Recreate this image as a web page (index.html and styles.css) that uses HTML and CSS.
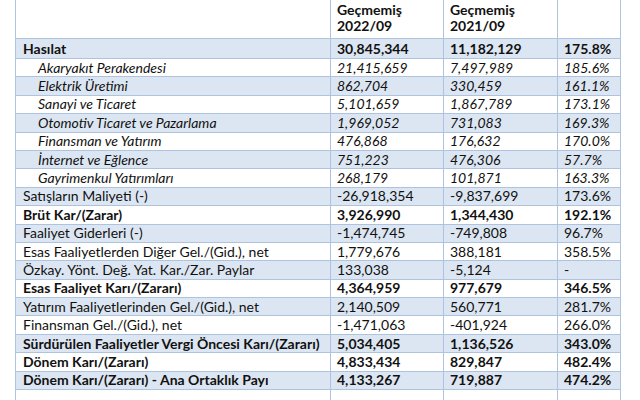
FILE: index.html
```html
<!DOCTYPE html>
<html lang="tr">
<head>
<meta charset="utf-8">
<title>Gelir Tablosu</title>
<link rel="stylesheet" href="styles.css">
</head>
<body>
<table class="fin">
  <colgroup>
    <col class="c-label"><col class="c-num"><col class="c-num2"><col class="c-pct">
  </colgroup>
  <thead>
    <tr class="head">
      <th></th>
      <th>Geçmemiş<br>2022/09</th>
      <th>Geçmemiş<br>2021/09</th>
      <th></th>
    </tr>
  </thead>
  <tbody>
    <tr class="b blue first"><td>Hasılat</td><td>30,845,344</td><td>11,182,129</td><td>175.8%</td></tr>
    <tr class="i"><td>Akaryakıt Perakendesi</td><td>21,415,659</td><td>7,497,989</td><td>185.6%</td></tr>
    <tr class="i blue"><td>Elektrik Üretimi</td><td>862,704</td><td>330,459</td><td>161.1%</td></tr>
    <tr class="i"><td>Sanayi ve Ticaret</td><td>5,101,659</td><td>1,867,789</td><td>173.1%</td></tr>
    <tr class="i blue"><td>Otomotiv Ticaret ve Pazarlama</td><td>1,969,052</td><td>731,083</td><td>169.3%</td></tr>
    <tr class="i"><td>Finansman ve Yatırım</td><td>476,868</td><td>176,632</td><td>170.0%</td></tr>
    <tr class="i blue"><td>İnternet ve Eğlence</td><td>751,223</td><td>476,306</td><td>57.7%</td></tr>
    <tr class="i"><td>Gayrimenkul Yatırımları</td><td>268,179</td><td>101,871</td><td>163.3%</td></tr>
    <tr class="blue"><td>Satışların Maliyeti (-)</td><td>-26,918,354</td><td>-9,837,699</td><td>173.6%</td></tr>
    <tr class="b"><td>Brüt Kar/(Zarar)</td><td>3,926,990</td><td>1,344,430</td><td>192.1%</td></tr>
    <tr class="blue"><td>Faaliyet Giderleri (-)</td><td>-1,474,745</td><td>-749,808</td><td>96.7%</td></tr>
    <tr><td>Esas Faaliyetlerden Diğer Gel./(Gid.), net</td><td>1,779,676</td><td>388,181</td><td>358.5%</td></tr>
    <tr class="blue"><td>Özkay. Yönt. Değ. Yat. Kar./Zar. Paylar</td><td>133,038</td><td>-5,124</td><td>-</td></tr>
    <tr class="b"><td>Esas Faaliyet Karı/(Zararı)</td><td>4,364,959</td><td>977,679</td><td>346.5%</td></tr>
    <tr class="blue"><td>Yatırım Faaliyetlerinden Gel./(Gid.), net</td><td>2,140,509</td><td>560,771</td><td>281.7%</td></tr>
    <tr><td>Finansman Gel./(Gid.), net</td><td>-1,471,063</td><td>-401,924</td><td>266.0%</td></tr>
    <tr class="b blue"><td>Sürdürülen Faaliyetler Vergi Öncesi Karı/(Zararı)</td><td>5,034,405</td><td>1,136,526</td><td>343.0%</td></tr>
    <tr class="b"><td>Dönem Karı/(Zararı)</td><td>4,833,434</td><td>829,847</td><td>482.4%</td></tr>
    <tr class="b blue"><td>Dönem Karı/(Zararı) - Ana Ortaklık Payı</td><td>4,133,267</td><td>719,887</td><td>474.2%</td></tr>
    <tr class="empty"><td></td><td></td><td></td><td></td></tr>
  </tbody>
</table>
</body>
</html>
```

FILE: styles.css
```css
html, body {
  margin: 0;
  padding: 0;
  background: #ffffff;
}

body {
  font-family: Lato, "Open Sans", sans-serif;
  font-size: 14px;
  color: #111111;
  overflow: hidden;
  height: 400px;
}

.fin {
  border-collapse: collapse;
  table-layout: fixed;
  margin-left: 15px;
  width: 605px;
}

.c-label { width: 315px; }
.c-num { width: 113px; }
.c-num2 { width: 114px; }
.c-pct { width: 63px; }

.fin th,
.fin td {
  border: 1px solid #aec3df;
  padding: 0 0 0 6px;
  text-align: left;
  vertical-align: middle;
  white-space: nowrap;
  line-height: 16px;
}

.fin td:first-child { padding-left: 7px; }

.head th {
  border-top: none;
  height: 36px;
  font-weight: 700;
  line-height: 16px;
  vertical-align: top;
  padding-top: 2px;
}

.fin tbody tr { height: 18.4px; }
.fin tbody tr.first { height: 20px; }

.blue td { background: #dce6f2; }

.b td { font-weight: 700; }

.i td { font-style: italic; }
.i td:first-child { padding-left: 22px; }

.empty { height: 22px; }
```
